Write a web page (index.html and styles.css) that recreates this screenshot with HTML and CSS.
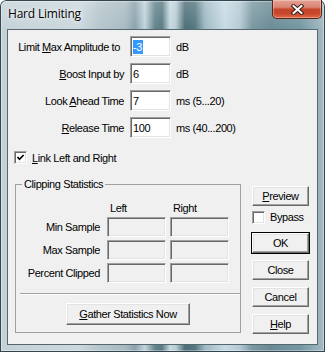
FILE: index.html
```html
<!DOCTYPE html>
<html>
<head>
    <title>Hard Limiting</title>
    <link rel="stylesheet" href="styles.css">
</head>
<body>
    <div class="window">
        <div class="titlebar">
            <span class="title-text">Hard Limiting</span>
            <div class="close">
                <svg width="13" height="11" viewBox="0 0 13 11">
                    <path d="M2.5 2 L10.5 9 M10.5 2 L2.5 9" stroke="#3b1d16" stroke-width="4" stroke-linecap="square"/>
                    <path d="M2.5 2 L10.5 9 M10.5 2 L2.5 9" stroke="#fff" stroke-width="2" stroke-linecap="square"/>
                </svg>
            </div>
        </div>

        <div class="client">
            <div class="fields">
                <div class="row">
                    <span class="label first">Limit <u>M</u>ax Amplitude to</span>
                    <div class="field"><span class="selected">-3</span></div>
                    <span class="unit">dB</span>
                </div>
                <div class="row">
                    <span class="label"><u>B</u>oost Input by</span>
                    <div class="field">6</div>
                    <span class="unit">dB</span>
                </div>
                <div class="row">
                    <span class="label">Look <u>A</u>head Time</span>
                    <div class="field">7</div>
                    <span class="unit">ms (5...20)</span>
                </div>
                <div class="row">
                    <span class="label"><u>R</u>elease Time</span>
                    <div class="field">100</div>
                    <span class="unit">ms (40...200)</span>
                </div>
            </div>

            <div class="link">
                <span class="checkbox">
                    <svg width="9" height="9" viewBox="0 0 9 9">
                        <path d="M1.5 4 L3.5 6.3 L7.6 2" fill="none" stroke="#000" stroke-width="1.7"/>
                    </svg>
                </span>
                <span class="check-text"><u>L</u>ink Left and Right</span>
            </div>

            <div class="lower">
                <fieldset class="group">
                    <legend>Clipping Statistics</legend>
                    <div class="stats">
                        <span></span>
                        <span class="head">Left</span>
                        <span class="head">Right</span>

                        <span class="stat-label">Min Sample</span>
                        <div class="field empty"></div>
                        <div class="field empty"></div>

                        <span class="stat-label">Max Sample</span>
                        <div class="field empty"></div>
                        <div class="field empty"></div>

                        <span class="stat-label">Percent Clipped</span>
                        <div class="field empty"></div>
                        <div class="field empty"></div>
                    </div>
                    <div class="separator"></div>
                    <button class="button gather"><u>G</u>ather Statistics Now</button>
                </fieldset>

                <div class="side">
                    <button class="button"><u>P</u>review</button>
                    <div class="bypass">
                        <span class="checkbox"></span>
                        <span class="check-text">Bypass</span>
                    </div>
                    <button class="button ok">OK</button>
                    <button class="button spaced">Close</button>
                    <button class="button spaced">Cancel</button>
                    <button class="button spaced"><u>H</u>elp</button>
                </div>
            </div>
        </div>
    </div>
</body>
</html>
```

FILE: styles.css
```css
body {
    margin: 0;
    background-color: #fff;
    color: #000;
    font-family: "Liberation Sans", Arial, sans-serif;
    font-size: 11px;
    letter-spacing: -0.4px;
}

.window {
    width: 325px;
    height: 352px;
    box-sizing: border-box;
    padding: 0 7px 7px 7px;
    display: flex;
    flex-direction: column;
    border-radius: 6px 6px 0 0;
    background:
        linear-gradient(to bottom, rgba(255, 255, 255, 0.2), rgba(255, 255, 255, 0) 30px),
        linear-gradient(to right, #c4d2d8 0, #cbd8dd 80px, #b5c5cc 100px, #a9bbc2 125px, #8aa2ab 135px,
            #c3d4dc 145px, #62838c 155px, #5a7a83 162px, #c6d9e2 170px, #b9ccd4 176px, #4d6e77 185px,
            #557780 195px, #a0b9c3 205px, #c8dbe5 225px, #b4c9d2 240px, #7c98a2 252px, #6a8b95 270px,
            #7597a1 300px, #a6bdc5 325px);
    box-shadow: inset 0 0 0 1px #34474f, inset 0 0 0 2px rgba(255, 255, 255, 0.35);
}

.titlebar {
    height: 29px;
    display: flex;
    justify-content: space-between;
    align-items: flex-start;
    margin-right: -4px;
}

.title-text {
    font-family: "Open Sans", "Liberation Sans", sans-serif;
    font-size: 12px;
    letter-spacing: -0.2px;
    line-height: 16px;
    margin-left: 1px;
    padding-top: 6px;
    text-shadow: 0 0 6px rgba(255, 255, 255, 0.9), 0 0 3px rgba(255, 255, 255, 0.7);
}

.close {
    width: 50px;
    height: 19px;
    box-sizing: border-box;
    border: 1px solid #5c2419;
    border-top: none;
    border-radius: 0 0 5px 5px;
    background: linear-gradient(to bottom, #e3a293 0, #d98573 40%, #c5452b 52%, #c7472d 75%, #e06a48 100%);
    box-shadow: inset 0 0 0 1px rgba(255, 255, 255, 0.3);
    display: flex;
    align-items: center;
    justify-content: center;
}

.client {
    flex: 1;
    background-color: #f0f0f0;
    border: 1px solid #56686f;
    display: flex;
    flex-direction: column;
}

.fields {
    padding-top: 6px;
    display: flex;
    flex-direction: column;
    gap: 6px;
}

.row {
    display: flex;
    align-items: center;
    height: 21px;
}

.label {
    width: 116px;
    box-sizing: border-box;
    text-align: right;
}

.label.first {
    padding-right: 4px;
}

.field {
    width: 41px;
    height: 21px;
    margin-left: 6px;
    box-sizing: border-box;
    background-color: #fff;
    border: 1px solid;
    border-color: #a0a0a0 #fff #fff #a0a0a0;
    box-shadow: inset 1px 1px 0 #696969, inset -1px -1px 0 #e3e3e3;
    padding-left: 2px;
    display: flex;
    align-items: center;
}

.selected {
    background-color: #3399ff;
    color: #fff;
    line-height: 14px;
    padding-right: 1px;
}

.unit {
    margin-left: 5px;
}

.link {
    display: flex;
    align-items: center;
    height: 13px;
    margin: 13px 0 0 6px;
}

.checkbox {
    width: 13px;
    height: 13px;
    box-sizing: border-box;
    background-color: #fff;
    border: 1px solid;
    border-color: #a0a0a0 #fff #fff #a0a0a0;
    box-shadow: inset 1px 1px 0 #696969, inset -1px -1px 0 #e3e3e3;
    display: flex;
    align-items: center;
    justify-content: center;
}

.check-text {
    margin-left: 5px;
}

.lower {
    display: flex;
    align-items: flex-start;
    margin-top: 14px;
    padding-left: 7px;
}

.group {
    width: 226px;
    min-width: 0;
    box-sizing: border-box;
    margin: 0;
    padding: 10px 0 7px 0;
    border: 1px solid #a0a0a0;
}

.group legend {
    margin-left: 6px;
    padding: 0 2px;
    line-height: 13px;
}

.stats {
    display: grid;
    grid-template-columns: 87px 59px 59px;
    grid-template-rows: 13px 20px 20px 20px;
    column-gap: 4px;
    row-gap: 3px;
    align-items: center;
}

.stat-label {
    text-align: right;
    padding-right: 3px;
}

.head {
    padding-left: 3px;
}

.field.empty {
    width: 59px;
    height: 20px;
    margin-left: 0;
    background-color: #f0f0f0;
}

.separator {
    margin: 10px 0 0 4px;
    border-top: 1px solid #a0a0a0;
    border-bottom: 1px solid #fff;
}

.button {
    width: 57px;
    height: 20px;
    padding: 0;
    font-family: "Liberation Sans", Arial, sans-serif;
    font-size: 11px;
    letter-spacing: -0.4px;
    color: #000;
    background-color: #f0f0f0;
    border: 1px solid;
    border-color: #fff #696969 #696969 #fff;
    box-shadow: inset -1px -1px 0 #a0a0a0, inset 1px 1px 0 #e3e3e3;
}

.gather {
    display: block;
    width: 124px;
    height: 22px;
    margin: 8px auto 0 auto;
}

.side {
    width: 57px;
    margin-left: 11px;
    padding-top: 8px;
    display: flex;
    flex-direction: column;
}

.bypass {
    display: flex;
    align-items: center;
    height: 14px;
    margin-top: 4px;
}

.ok {
    margin-top: 9px;
    outline: 1px solid #000;
}

.spaced {
    margin-top: 7px;
}
```
